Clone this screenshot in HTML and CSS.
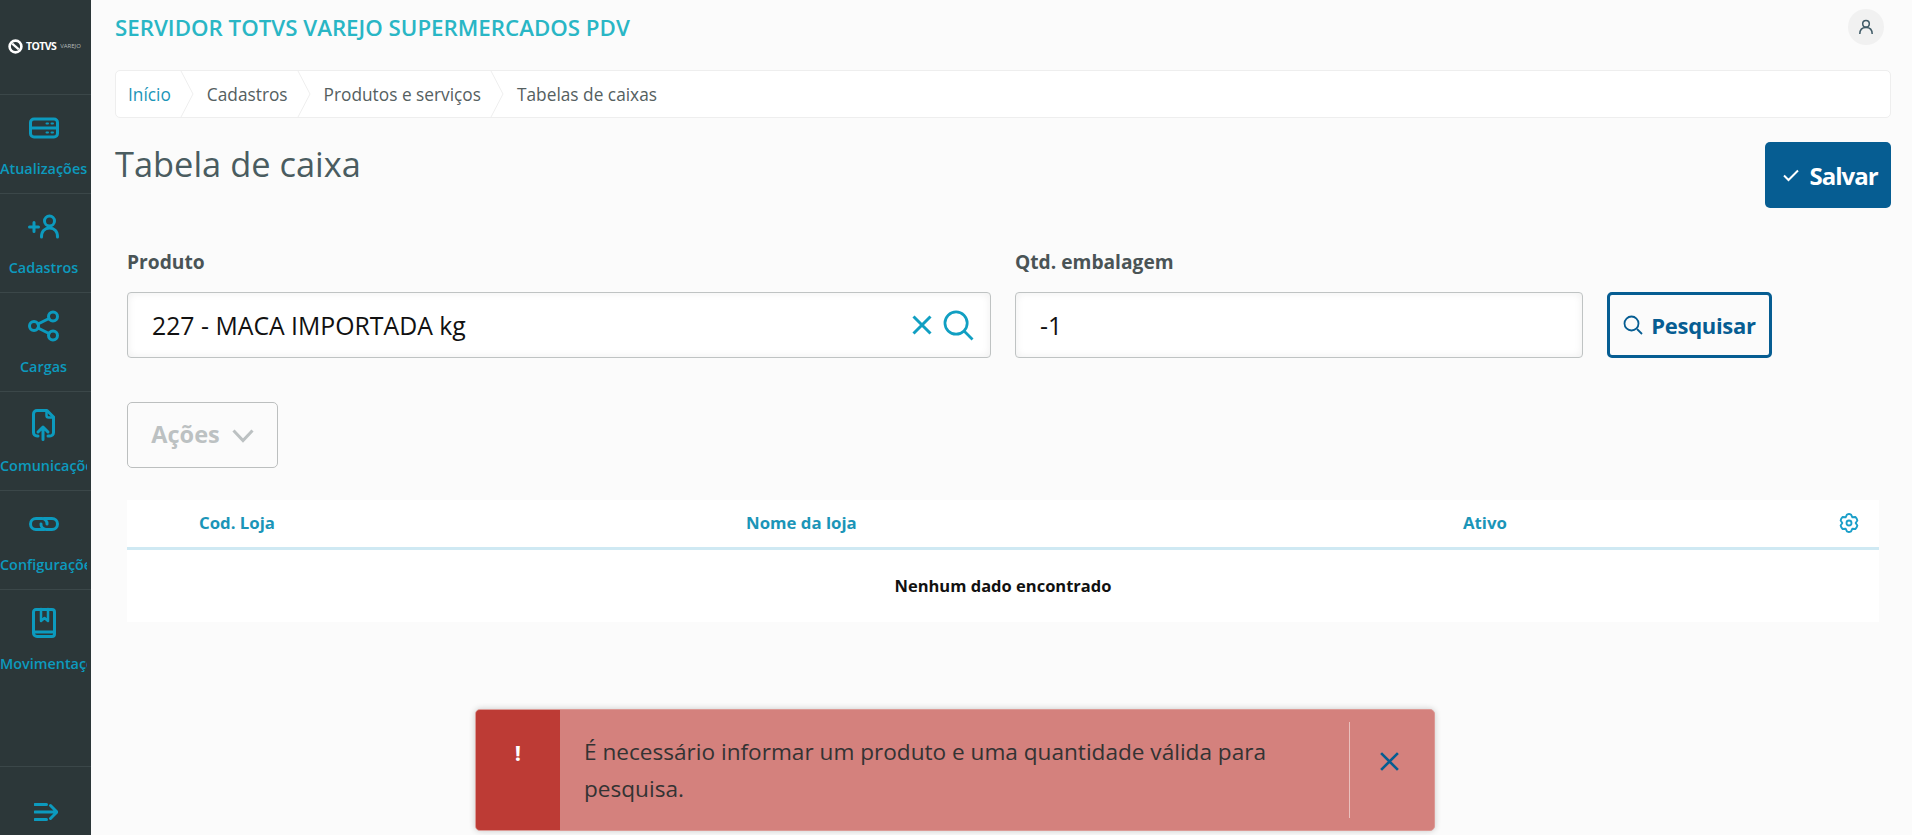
FILE: index.html
```html
<!DOCTYPE html>
<html lang="pt-BR">
<head>
  <meta charset="UTF-8">
  <meta name="viewport" content="width=device-width, initial-scale=1.0">
  <title>Tabela de caixa</title>
  <link rel="stylesheet" href="styles.css">
</head>
<body>

  <div class="app">
    <!-- Menu lateral -->
    <nav class="sidebar">
      <div class="logo">
        <svg class="logo-mark" viewBox="0 0 16 16"><circle cx="8" cy="8" r="6.300" fill="none" stroke="#fff" stroke-width="2.800"/><path d="M4.500 5L11.500 11" stroke="#fff" stroke-width="2.400"/></svg>
        <span class="logo-name">TOTVS</span>
        <span class="logo-sub">VAREJO</span>
      </div>
      <a class="nav-item">
        <svg viewBox="0 0 32 32" class="nav-icon"><rect x="2.500" y="7" width="27" height="18" rx="3.500"/><path d="M2.500 16h27"/><path class="dots" d="M18.500 11.500h1.500M23.500 11.500h1.500M18.500 20.500h1.500M23.500 20.500h1.500"/></svg>
        <span>Atualizações</span>
      </a>
      <a class="nav-item">
        <svg viewBox="0 0 32 32" class="nav-icon"><circle cx="21.500" cy="10" r="5"/><path d="M13.500 26c0-6 3.500-9 8-9s8 3 8 9"/><path d="M1.500 16h9M6 11.500v9"/></svg>
        <span>Cadastros</span>
      </a>
      <a class="nav-item">
        <svg viewBox="0 0 32 32" class="nav-icon"><circle cx="6" cy="16" r="4.500"/><circle cx="25" cy="6.500" r="4.500"/><circle cx="25" cy="25.500" r="4.500"/><path d="M10 14l11-5.500M10 18l11 5.500"/></svg>
        <span>Cargas</span>
      </a>
      <a class="nav-item">
        <svg viewBox="0 0 32 32" class="nav-icon"><path d="M10 27H9a3.500 3.500 0 0 1-3.500-3.500V5A3.500 3.500 0 0 1 9 1.500h10l6.500 6.500v15.500A3.500 3.500 0 0 1 22 27h-2"/><path class="thin" d="M18.500 2v4.500a2 2 0 0 0 2 2h5"/><path d="M15 30.500V18M10 23l5-5 5 5"/></svg>
        <span>Comunicações</span>
      </a>
      <a class="nav-item">
        <svg viewBox="0 0 32 32" class="nav-icon"><path d="M16 21.500H8a5 5 0 0 1 0-11h6a5 5 0 0 1 5 5.500"/><path d="M16 10.500h8a5 5 0 0 1 0 11h-6a5 5 0 0 1-5-5.500"/></svg>
        <span>Configurações</span>
      </a>
      <a class="nav-item">
        <svg viewBox="0 0 32 32" class="nav-icon"><path d="M8 2.500h16a2.500 2.500 0 0 1 2.500 2.500v22a2.500 2.500 0 0 1-2.500 2.500H9A3.500 3.500 0 0 1 5.500 26V5A2.500 2.500 0 0 1 8 2.500z"/><path d="M5.500 25h21"/><path class="thin" d="M13 2v12l3.500-3 3.500 3V2"/></svg>
        <span>Movimentações</span>
      </a>
      <div class="nav-toggle">
        <svg viewBox="0 0 24 18" class="toggle-icon"><path d="M1 1.500h11.500M1 16.500h11.500M1 9h21M16.500 2.500L23 9l-6.500 6.500"/></svg>
      </div>
    </nav>

    <main class="content">
      <header class="topbar">
        <h1 class="server-name">SERVIDOR TOTVS VAREJO SUPERMERCADOS PDV</h1>
        <div class="avatar">
          <svg viewBox="0 0 16 16"><circle cx="8" cy="4.800" r="3.300"/><path d="M1.800 15c0-4 2.500-6.500 6.200-6.500s6.200 2.500 6.200 6.500"/></svg>
        </div>
      </header>

      <div class="breadcrumb">
        <a class="crumb first">Início</a>
        <svg class="crumb-sep" viewBox="0 0 14 46"><path d="M1 0l12 23L1 46"/></svg>
        <a class="crumb">Cadastros</a>
        <svg class="crumb-sep" viewBox="0 0 14 46"><path d="M1 0l12 23L1 46"/></svg>
        <a class="crumb">Produtos e serviços</a>
        <svg class="crumb-sep" viewBox="0 0 14 46"><path d="M1 0l12 23L1 46"/></svg>
        <a class="crumb">Tabelas de caixas</a>
      </div>

      <div class="page-head">
        <h2>Tabela de caixa</h2>
        <button class="btn-save">
          <svg viewBox="0 0 16 16"><path d="M1 8.500l4.500 4.500L15 3.500"/></svg>
          Salvar
        </button>
      </div>

      <div class="filters">
        <div class="field field-product">
          <label>Produto</label>
          <div class="input">
            <span class="input-text">227 - MACA IMPORTADA kg</span>
            <svg class="input-clear" viewBox="0 0 20 20"><path d="M1.500 1.500l17 17M18.500 1.500l-17 17"/></svg>
            <svg class="input-search" viewBox="0 0 32 32"><circle cx="13.500" cy="13.500" r="11.500"/><path d="M22 22l8.500 8.500"/></svg>
          </div>
        </div>
        <div class="field field-qty">
          <label>Qtd. embalagem</label>
          <div class="input">
            <span class="input-text">-1</span>
          </div>
        </div>
        <button class="btn-search">
          <svg viewBox="0 0 20 20"><circle cx="8.500" cy="8.500" r="7"/><path d="M14 14l5 5"/></svg>
          Pesquisar
        </button>
      </div>

      <button class="btn-actions">
        Ações
        <svg viewBox="0 0 22 14"><path d="M1.500 1.500l9.500 10 9.500-10"/></svg>
      </button>

      <section class="table">
        <div class="table-head">
          <span>Cod. Loja</span>
          <span>Nome da loja</span>
          <span>Ativo</span>
          <svg class="gear" viewBox="0 0 24 24"><circle cx="12" cy="12" r="3"/><path d="M9.640 1.770Q12 .6 14.360 1.770L16 5.070 19.680 4.840Q21.500 6.500 22.040 8.930L20 12 22.040 15.070Q21.500 17.500 19.680 19.160L16 18.930 14.360 22.230Q12 23.400 9.640 22.230L8 18.930 4.320 19.160Q2.500 17.500 1.960 15.070L4 12 1.960 8.930Q2.500 6.500 4.320 4.840L8 5.070z"/></svg>
        </div>
        <div class="table-empty">Nenhum dado encontrado</div>
      </section>
    </main>
  </div>

  <!-- Aviso de erro -->
  <div class="toast">
    <div class="toast-icon">!</div>
    <p class="toast-text">É necessário informar um produto e uma quantidade válida para pesquisa.</p>
    <div class="toast-close">
      <svg viewBox="0 0 20 20"><path d="M2 2l16 16M18 2L2 18"/></svg>
    </div>
  </div>

</body>
</html>
```

FILE: styles.css
```css
* {
  margin: 0;
  padding: 0;
  box-sizing: border-box;
}

html, body {
  height: 100%;
  overflow: hidden;
  font-family: "Open Sans", sans-serif;
  background: #fbfbfb;
}

svg {
  display: block;
  fill: none;
}

.app {
  display: flex;
  height: 835px;
}

/* Menu lateral */
.sidebar {
  width: 91px;
  flex-shrink: 0;
  display: flex;
  flex-direction: column;
  background: #2c3739;
}

.logo {
  height: 94px;
  display: flex;
  align-items: center;
  padding: 0 0 2px 8px;
  color: #fff;
}

.logo-mark {
  width: 15px;
  height: 15px;
  margin-right: 3px;
}

.logo-name {
  font-size: 10.500px;
  font-weight: 700;
  letter-spacing: -0.600px;
  margin-right: 4px;
}

.logo-sub {
  font-size: 6px;
  color: #b5bbbc;
}

.nav-item {
  height: 99px;
  padding-right: 4px;
  border-top: 1px solid #3b4749;
  display: flex;
  flex-direction: column;
  align-items: center;
  color: #0c9abe;
  font-size: 14.400px;
  font-weight: 600;
}

.nav-item span {
  width: 100%;
  margin-top: 15px;
  line-height: 20px;
  text-align: center;
  white-space: nowrap;
  overflow: hidden;
}

.nav-icon {
  width: 32px;
  height: 32px;
  margin-top: 17px;
  flex-shrink: 0;
  stroke: #0c9abe;
  stroke-width: 3;
  stroke-linecap: round;
  stroke-linejoin: round;
}

.nav-icon .dots {
  stroke-width: 2;
}

.nav-icon .thin {
  stroke-width: 2.500;
}

.nav-toggle {
  margin-top: auto;
  height: 69px;
  border-top: 1px solid #3b4749;
  display: flex;
  justify-content: center;
  padding-top: 36px;
}

.toggle-icon {
  width: 24px;
  height: 18px;
  stroke: #0c9abe;
  stroke-width: 3;
  stroke-linecap: round;
  stroke-linejoin: round;
}

/* Conteudo */
.content {
  flex: 1;
  padding: 0 21px 0 24px;
}

.topbar {
  height: 70px;
  display: flex;
  justify-content: space-between;
  padding-top: 9px;
}

.server-name {
  font-size: 22.300px;
  font-weight: 600;
  color: #29b6c5;
  line-height: 38px;
  height: 38px;
}

.avatar {
  width: 36px;
  height: 36px;
  margin-right: 7px;
  border-radius: 50%;
  background: #f1f1f1;
  display: flex;
  align-items: center;
  justify-content: center;
}

.avatar svg {
  width: 16px;
  height: 16px;
  stroke: #3f5a66;
  stroke-width: 1.500;
}

.breadcrumb {
  height: 48px;
  display: flex;
  align-items: center;
  background: #fff;
  border: 1px solid #eee;
  border-radius: 5px;
  font-size: 17.300px;
  color: #55605f;
}

.crumb {
  padding: 0 9px 0 13px;
}

.crumb.first {
  color: #1b95b8;
  padding-left: 12px;
}

.crumb-sep {
  width: 14px;
  height: 46px;
  stroke: #eee;
  stroke-width: 1;
}

.page-head {
  height: 132px;
  display: flex;
  justify-content: space-between;
  padding-top: 24px;
}

.page-head h2 {
  font-size: 34.400px;
  font-weight: 400;
  color: #4a5c60;
  line-height: 44px;
}

.btn-save {
  width: 126px;
  height: 66px;
  padding-left: 5px;
  display: flex;
  align-items: center;
  justify-content: center;
  gap: 10px;
  background: #065d92;
  color: #fff;
  border: none;
  border-radius: 5px;
  font-family: inherit;
  font-size: 24px;
  font-weight: 700;
  letter-spacing: -1px;
}

.btn-save svg {
  width: 16px;
  height: 16px;
  stroke: #fff;
  stroke-width: 2;
}

.filters {
  display: flex;
  align-items: flex-end;
  padding-left: 12px;
  gap: 24px;
}

.field label {
  display: block;
  font-size: 19.200px;
  font-weight: 700;
  color: #4a5456;
  line-height: 24px;
  margin-bottom: 18px;
}

.field-product {
  width: 864px;
}

.field-qty {
  width: 568px;
}

.input {
  height: 66px;
  display: flex;
  align-items: center;
  padding: 0 16px 0 24px;
  background: #fff;
  border: 1px solid #bfc3c3;
  border-radius: 4px;
  box-shadow: inset 0 0 8px rgba(0,0,0,0.07);
}

.input-text {
  flex: 1;
  font-size: 24.800px;
  color: #111;
}

.input-clear {
  width: 20px;
  height: 20px;
  stroke: #119fc2;
  stroke-width: 3;
  margin-right: 11px;
}

.input-search {
  width: 31px;
  height: 31px;
  stroke: #119fc2;
  stroke-width: 2.800;
}

.btn-search {
  width: 165px;
  height: 66px;
  display: flex;
  align-items: center;
  justify-content: center;
  gap: 8px;
  background: #fbfbfb;
  color: #065d92;
  border: 3px solid #065d92;
  border-radius: 5px;
  font-family: inherit;
  font-size: 22px;
  font-weight: 700;
  letter-spacing: -0.300px;
}

.btn-search svg {
  width: 20px;
  height: 20px;
  stroke: #065d92;
  stroke-width: 1.800;
}

.btn-actions {
  width: 151px;
  height: 66px;
  margin: 44px 0 32px 12px;
  padding-bottom: 3px;
  display: flex;
  align-items: center;
  justify-content: center;
  gap: 12px;
  background: #fbfbfb;
  color: #bcc1c2;
  border: 1px solid #bcbfbf;
  border-radius: 5px;
  font-family: inherit;
  font-size: 23.500px;
  font-weight: 700;
}

.btn-actions svg {
  width: 22px;
  height: 14px;
  stroke: #bcc1c2;
  stroke-width: 3;
  margin-top: 5px;
}

.table {
  margin-left: 12px;
  margin-right: 12px;
  background: #fff;
}

.table-head {
  height: 50px;
  display: grid;
  grid-template-columns: 547px 717px 1fr 20px;
  align-items: center;
  padding: 0 20px 2px 72px;
  border-bottom: 3px solid #cfe9f3;
  font-size: 16.800px;
  font-weight: 700;
  color: #1b95b8;
}

.gear {
  width: 20px;
  height: 20px;
  stroke: #1b9fc9;
  stroke-width: 2.200;
  stroke-linejoin: round;
}

.table-empty {
  height: 72px;
  padding-bottom: 2px;
  display: flex;
  align-items: center;
  justify-content: center;
  font-size: 16.500px;
  font-weight: 700;
  color: #111;
}

/* Aviso de erro */
.toast {
  position: absolute;
  left: 475px;
  top: 709px;
  width: 960px;
  height: 122px;
  display: flex;
  background: #d4817d;
  border: 1px solid #dc9a96;
  border-radius: 5px;
  overflow: hidden;
  box-shadow: 0 0 6px rgba(0,0,0,0.2);
}

.toast-icon {
  width: 84px;
  flex-shrink: 0;
  display: flex;
  align-items: center;
  justify-content: center;
  background: #bd3b35;
  color: #fff;
  font-size: 22px;
  font-weight: 700;
  padding-bottom: 37px;
}

.toast-text {
  flex: 1;
  padding: 23px 16px 0 24px;
  font-size: 22.600px;
  line-height: 37px;
  color: #333;
}

.toast-close {
  width: 85px;
  margin: 12px 0;
  padding: 0 5px 17px 0;
  display: flex;
  align-items: center;
  justify-content: center;
  border-left: 1px solid #e9c0bd;
}

.toast-close svg {
  width: 21px;
  height: 21px;
  stroke: #065d92;
  stroke-width: 2.500;
}
```
